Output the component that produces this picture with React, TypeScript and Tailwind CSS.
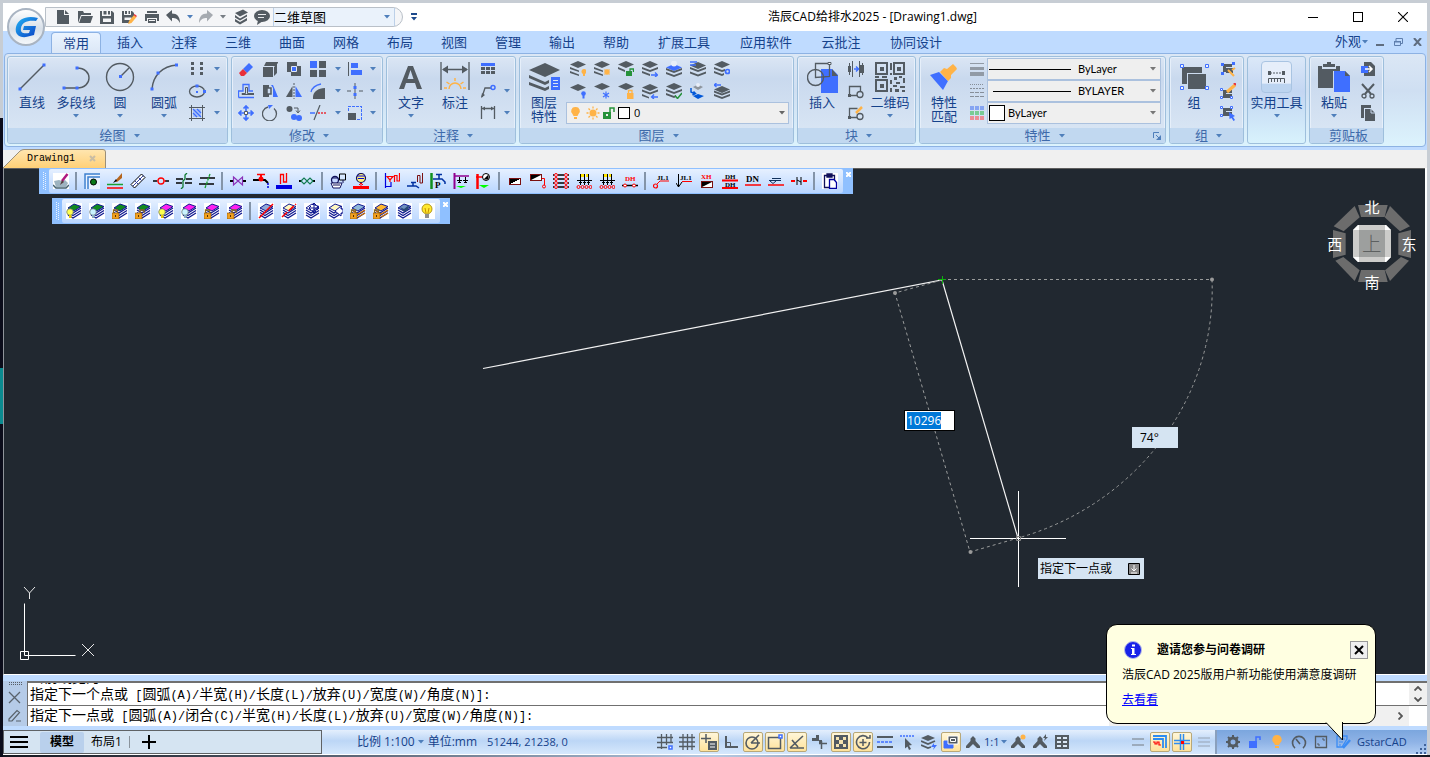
import { useEffect, useRef } from "react";
import type { ReactNode } from "react";

const K = "#535b62";
const B = "#3f6fff";
const O = "#ffb347";
const G = "#26923a";
const R = "#e8303a";
const N = "#101890";

type SvgProps = { w?: number; h?: number; vb?: string; crisp?: boolean; children: ReactNode };
function S({ w = 16, h = 16, vb, crisp, children }: SvgProps) {
  return (
    <svg
      width={w}
      height={h}
      viewBox={vb ?? `0 0 ${w} ${h}`}
      fill="none"
      className="block shrink-0"
      shapeRendering={crisp ? "crispEdges" : "auto"}
      aria-hidden="true"
    >
      {children}
    </svg>
  );
}

function Arrow({ color = "#4f7fbb" }: { color?: string }) {
  return (
    <S w={6} h={4}>
      <path d="M0 0h6L3 3.500z" fill={color} />
    </S>
  );
}

/* ---------- quick access icons ---------- */
const quickIcons: { name: string; icon: ReactNode; width: string }[] = [
  { name: "新建", width: "w-[22px]", icon: <S><path d="M2 1h7v5h5v9H2zM10 1l4 4h-4z" fill={K} /></S> },
  { name: "打开", width: "w-[22px]", icon: <S><path d="M1 14V2h5l1 2h7v2H4z" fill={K} /><path d="M4.500 7H16l-2.500 7H2z" fill={K} /></S> },
  { name: "保存", width: "w-[22px]", icon: <S><path d="M1 2h2v5h9V2h1l2 2v11H1z" fill={K} /><path d="M4.500 2h3v3.500h-3zM9 2h2v3.500H9z" fill={K} /><path d="M4 9.500h8V13H4z" fill="#f4f5f7" /></S> },
  { name: "另存为", width: "w-[22px]", icon: <S><path d="M1 2h2v4h7V2h1l2 2v4l-4 6H1z" fill={K} /><path d="M4 2h2v3H4zM7.500 2H9v3H7.500z" fill={K} /><path d="M3.500 8.500h7V11h-7z" fill="#f4f5f7" /><path d="M7 15l1-3 5-6 2.500 2-5 6z" fill={O} /><path d="M12.500 6l1-1 2.500 2-1 1z" fill={R} /></S> },
  { name: "打印", width: "w-[23px]", icon: <S><path d="M3 2h10v2H3zM1 5h14v7h-2V9H3v3H1z" fill={K} /><path d="M4 10h8v4H4z" fill={K} /><path d="M5 11h6v1H5z" fill="#f4f5f7" /></S> },
  { name: "放弃", width: "w-[20px]", icon: <S><path d="M1 6l6-5v3.500c5 0 8 3 8 9.500-2-4-4-5-8-5v3.500z" fill={K} /></S> },
  { name: "放弃列表", width: "w-[13px]", icon: <Arrow /> },
  { name: "重做", width: "w-[20px]", icon: <S><path d="M15 6L9 1v3.500c-5 0-8 3-8 9.500 2-4 4-5 8-5v3.500z" fill="#a5aab0" /></S> },
  { name: "重做列表", width: "w-[14px]", icon: <Arrow color="#777d84" /> },
  { name: "图层", width: "w-[21px]", icon: <S><path d="M2 4l8-3.500 5 3L7 7.500zM2 6l5 3.500 7-4v2l-7 4-5-3zM2 10l5 3 7-4v2.500L7 15.500l-5-3z" fill={K} /></S> },
  { name: "消息", width: "w-[22px]", icon: <S><ellipse cx="8" cy="7" rx="8" ry="6" fill={K} /><path d="M4 11l-1 5 6-4z" fill={K} /><path d="M4 5h8v1H4zM4 8h6v1H4z" fill="#e8eaec" /></S> },
];

/* ---------- ribbon primitives ---------- */
function Panel({ title, width, more = true, launcher, children }: { title: string; width: string; more?: boolean; launcher?: boolean; children: ReactNode }) {
  return (
    <section
      className={`${width} shrink-0 flex flex-col h-[88px] rounded-[3px] border border-[#9ebfdc] shadow-[inset_0_0_0_1px_#e6effa] overflow-hidden bg-linear-to-b from-[#dbe6f4] from-0% via-[#c9d9ee] via-25% to-[#dce8f5] to-100%`}
    >
      <div className="flex flex-1 px-[2px]">{children}</div>
      <h2 className="relative flex h-[15px] items-center justify-center gap-2 bg-[#c1d8f0] pl-1 text-[13px] leading-[15px] text-[#3e6aaa]">
        {title}
        {more && <Arrow />}
        {launcher && (
          <span className="absolute right-1 top-1">
            <S w={8} h={8}><path d="M.500 6V.500H6M3 3l3 3" stroke="#4f7fbb" /><path d="M8 3v5H3z" fill="#4f7fbb" /></S>
          </span>
        )}
      </h2>
    </section>
  );
}

function Big({ icon, label, second, arrow, width = "w-11" }: { icon: ReactNode; label: string; second?: string; arrow?: boolean; width?: string }) {
  return (
    <button className={`${width} shrink-0 flex flex-col items-center pt-1 text-[13px] text-[#15428b] whitespace-nowrap`}>
      <span className="flex h-8 items-center justify-center">{icon}</span>
      {second ? (
        <span className="flex flex-col pt-[2px] leading-[14px]"><span>{label}</span><span>{second}</span></span>
      ) : (
        <span className="leading-[18px]">{label}</span>
      )}
      {arrow && <span className="pt-[3px]"><Arrow /></span>}
    </button>
  );
}

function Cell({ name, children }: { name: string; children?: ReactNode }) {
  return (
    <button aria-label={name} className="flex items-center justify-center">
      {children}
    </button>
  );
}
const Drop = ({ name }: { name: string }) => <Cell name={name}><Arrow /></Cell>;

const Chev = ({ y, c = K }: { y: number; c?: string }) => (
  <path d={`M0 ${y}l8 3 8-3v2l-8 3-8-3z`} fill={c} />
);
const Dia = ({ y = 0, c = K }: { y?: number; c?: string }) => <path d={`M0 ${y + 3.5}l8-3.500 8 3.500-8 3.500z`} fill={c} />;

const layerIcons: { name: string; icon: ReactNode }[] = [
  { name: "关闭图层", icon: <S><Dia /><path d="M0 6l9 3.500V11L0 8zM0 10l9 3.500V15L0 12z" fill={K} /><circle cx="14" cy="10.500" r="2.500" fill={O} /><path d="M13 12h2v3h-2z" fill={O} /></S> },
  { name: "冻结图层", icon: <S><Dia /><path d="M0 6l9 3.500V11L0 8zM0 10l9 3.500V15L0 12z" fill={K} /><path d="M10 8h6v6h-6z" fill={O} opacity=".5" /><circle cx="13" cy="11" r="2.400" fill={O} /></S> },
  { name: "解锁图层", icon: <S><Dia /><path d="M0 6l7 3v2L0 8z" fill={K} /><path d="M8 10h6v5H8z" fill={G} /><path d="M12 10V8h3.500v3" stroke={G} strokeWidth="1.300" /></S> },
  { name: "图层匹配", icon: <S><Dia /><Chev y={6} /><path d="M0 10l8 3v2l-8-3z" fill={K} /><path d="M9 14h6M13 11.500l2.500 2.500L13 16" stroke={B} strokeWidth="1.300" /></S> },
  { name: "隔离图层", icon: <S><Dia y={3} c={B} /><circle cx="8" cy="2.500" r="3" fill="#e8eef8" /><Chev y={7} /><Chev y={11} /></S> },
  { name: "图层状态", icon: <S><Dia y={1} /><Chev y={6} /><Chev y={10.5} /><path d="M0 1h7M0 4h6" stroke={B} strokeWidth="1.500" /></S> },
  { name: "图层设置", icon: <S><Dia /><path d="M0 6l8 3 3-1v2l-3 1-8-3zM0 10l8 3 2-1v2l-2 1-8-3z" fill={K} /><circle cx="13.500" cy="10.500" r="2" stroke={B} strokeWidth="1.700" /></S> },
  { name: "打开图层", icon: <S><Dia y={1} /><circle cx="13.500" cy="10.500" r="2.300" fill={B} /><path d="M12.500 12h2v3.500h-2z" fill={B} /></S> },
  { name: "解冻图层", icon: <S><Dia /><path d="M12 8.500v7M9 10l6 4M15 10l-6 4" stroke={B} strokeWidth="1.200" /></S> },
  { name: "锁定图层", icon: <S><Dia /><path d="M9 10h6.500v6H9z" fill={O} /><path d="M10.500 10V7.500h3.500V10" stroke={O} strokeWidth="1.300" /></S> },
  { name: "上一图层", icon: <S><Dia y={1} /><Chev y={6.5} /><path d="M0 11l7 3v1.500L0 13z" fill={K} /><path d="M9.500 14H16M12 11.500L9.500 14l2.500 2" stroke={B} strokeWidth="1.300" /></S> },
  { name: "更改为当前", icon: <S><Dia /><Chev y={6} /><path d="M0 10l8 3 2-1v2l-2 1-8-3z" fill={K} /><path d="M9 12.500l2.500 3L16 10" stroke={G} strokeWidth="1.500" /></S> },
  { name: "复制到图层", icon: <S><path d="M3 4l5-2.500L13 4 8 7z" fill="#8e959d" /><circle cx="8" cy="2" r="2" fill="#e8eef8" /><path d="M3 13l5-2 6 2-6 3z" fill="#0057d8" /><path d="M1 5v4l4 2M2.500 12l3-1.500-2-2" stroke="#0057d8" strokeWidth="1.500" /></S> },
  { name: "漫游图层", icon: <S><Dia y={3} /><Chev y={7.5} /><Chev y={11} /><path d="M0 2h7M2.500 0L0 2l2.500 2" stroke={B} strokeWidth="1.300" /></S> },
];

function DrawPanel() {
  return (
    <Panel title="绘图" width="w-[221px]">
      <Big label="直线" icon={<S w={28} h={30}><path d="M2 27L26 3" stroke={K} strokeWidth="1.400" /><path d="M.500 25.500h3v3h-3zM24.500 1.500h3v3h-3z" fill={B} /></S>} />
      <Big label="多段线" arrow icon={<S w={28} h={30}><path d="M2 26h13c16 0 16-20 0-20" stroke={K} strokeWidth="1.400" /><path d="M.500 24.500h3v3h-3zM13.500 24.500h3v3h-3zM13.500 4.500h3v3h-3z" fill={B} /></S>} />
      <Big label="圆" arrow icon={<S w={30} h={30}><circle cx="15" cy="15" r="13.500" stroke={K} strokeWidth="1.400" /><path d="M15 15l9-9" stroke={K} strokeWidth="1.400" /><path d="M14 13h3v3h-3z" fill={B} /></S>} />
      <Big label="圆弧" arrow icon={<S w={28} h={30}><path d="M2 27C3 14 12 4 27 3" stroke={K} strokeWidth="1.400" /><path d="M.500 25.500h3v3h-3zM6.500 9.500h3v3h-3zM25 1.500h3v3h-3z" fill={B} /></S>} />
      <div className="grid grid-cols-[22px_18px] grid-rows-[22px_22px_22px] pt-px">
        <Cell name="多点"><S crisp><path d="M2 1h3v3H2zM11 1h3v3h-3zM2 6h3v3H2zM11 6h3v3h-3zM2 11h3v3H2zM11 11h3v3h-3z" fill={K} /></S></Cell>
        <Drop name="多点列表" />
        <Cell name="椭圆"><S w={18}><ellipse cx="9" cy="8.500" rx="7.500" ry="5.500" stroke={K} strokeWidth="1.300" /><path d="M7.500 1.500h3v3h-3zM15 7h3v3h-3zM8 8h2v2H8z" fill={B} /></S></Cell>
        <Drop name="椭圆列表" />
        <Cell name="填充"><S><path d="M0 2.500h16M0 13.500h16M2.500 0v16M13.500 0v16" stroke={K} /><path d="M4 4h8v8H4z" fill="#a9c1f5" /><path d="M4 8l4 4M4 4l8 8M8 4l4 4" stroke={B} strokeWidth="1.200" /></S></Cell>
        <Drop name="填充列表" />
      </div>
    </Panel>
  );
}

function ModifyPanel() {
  return (
    <Panel title="修改" width="w-[152px]">
      <div className="grid grid-cols-[24px_24px_24px_24px_15px_20px_15px] grid-rows-[22px_22px_22px] pt-px">
        <Cell name="删除"><S><path d="M5 8l6-6 4 4-6 6z" fill={B} /><path d="M5 8l4 4-3 3H3l-2-3z" fill={R} /></S></Cell>
        <Cell name="长方体"><S><path d="M1 6h10v10H1zM4 1h12v1l-3 3H2zM12 6l3-3v9l-3 3z" fill={K} /></S></Cell>
        <Cell name="复制"><S><path d="M1 1h10v4H5v6H1z" fill={K} /><path d="M5 5h10v10H5z" fill={K} /><path d="M5.500 5.500h5v5h-5z" fill={B} stroke="#dfe8f5" /></S></Cell>
        <Cell name="阵列"><S crisp><path d="M0 0h7v7H0z" fill={B} /><path d="M9 0h7v7H9zM0 9h7v7H0zM9 9h7v7H9z" fill={K} /></S></Cell>
        <Drop name="阵列列表" />
        <Cell name="对齐"><S crisp><path d="M1 1h1v14H1z" fill={K} /><path d="M4 2h7v5H4zM4 9h11v5H4z" fill={B} /></S></Cell>
        <Drop name="对齐列表" />
        <Cell name="偏移"><S><path d="M.500 14.500V8H5V1.500h6V8h4M.500 14.500H16" stroke={B} strokeWidth="1.300" /><path d="M16 11.500H4l0-1h3.500V4.500h2v6H16" stroke={K} /></S></Cell>
        <Cell name="拉伸"><S><path d="M1 2h6v3H5v6h2v3H1z" fill={K} /><path d="M5 5h4v6H5z" stroke={K} strokeWidth="1.500" /><path d="M9 2h2l5 12h-5V5z" fill={B} /></S></Cell>
        <Cell name="镜像"><S><path d="M6.500 3v11H0z" fill={K} /><path d="M9.500 3v11H16z" fill={B} /><path d="M8 0v16" stroke={K} strokeDasharray="2 1" /></S></Cell>
        <Cell name="圆角"><S><path d="M3 16v-2C3 9 8 5 15 5v11z" fill={K} /><path d="M1 9c1-4 5-7 10-8" stroke={B} strokeWidth="1.300" /></S></Cell>
        <Drop name="圆角列表" />
        <Cell name="打断"><S><path d="M8 0v16M0 8h4M12 8h4" stroke={K} /><path d="M6.500 3h3v3h-3zM6.500 10h3v3h-3z" fill={B} /></S></Cell>
        <Drop name="打断列表" />
        <Cell name="移动"><S><path d="M8 1v14M1 8h14M5.500 3.500L8 1l2.500 2.500M5.500 12.500L8 15l2.500-2.500M3.500 5.500L1 8l2.500 2.500M12.500 5.500L15 8l-2.500 2.500" stroke={B} strokeWidth="1.700" /><path d="M6.500 6.500h3v3h-3z" fill="#fff" stroke={K} /></S></Cell>
        <Cell name="旋转"><S><path d="M12 3.500A7 7 0 1 1 6 2" stroke={K} strokeWidth="1.300" /><path d="M6 0h5L7 4z" fill={B} /></S></Cell>
        <Cell name="复制对象"><S><circle cx="3.500" cy="4" r="3" fill={K} /><circle cx="8" cy="12" r="3" fill={B} /><circle cx="13" cy="13" r="3" fill={B} /><path d="M8 3h4v4M10 5.500L12 8l2-2.500" stroke={K} /></S></Cell>
        <Cell name="修剪"><S><path d="M4 15L10 0" stroke={K} strokeWidth="1.200" /><path d="M0 8h5" stroke={B} strokeWidth="1.300" /><path d="M8 8h8" stroke={R} strokeDasharray="2 1" strokeWidth="1.300" /></S></Cell>
        <Drop name="修剪列表" />
        <Cell name="缩放"><S crisp><path d="M1 8h8v7H1z" fill={K} /><path d="M1.500 6V1.500h13v13H10" stroke={B} strokeDasharray="3 1" /></S></Cell>
        <Drop name="缩放列表" />
      </div>
    </Panel>
  );
}

function AnnotatePanel() {
  return (
    <Panel title="注释" width="w-[130px]">
      <Big label="文字" arrow icon={<S w={24} h={26}><path d="M0 25L9 2h5l9 23h-5l-2-6H7l-2 6zM8.500 15h6L11.500 6z" fill={K} fillRule="evenodd" /></S>} />
      <Big label="标注" icon={<S w={30} h={30}><path d="M1 0v28M29 0v28M3 7.500h24" stroke={K} strokeWidth="1.300" /><path d="M2 7.500l6-4v8zM28 7.500l-6-4v8z" fill={K} /><path d="M9 27a6 6 0 0 1 12 0" stroke={O} strokeWidth="1.500" /><path d="M15 16v3M6.500 20l3 2M23.500 20l-3 2M4 26h3M26 26h-3" stroke={O} strokeWidth="1.500" /></S>} />
      <div className="grid grid-cols-[22px_16px] grid-rows-[22px_22px_22px] pt-px">
        <Cell name="表格"><S crisp><path d="M1 2h14v3H1z" fill={B} /><path d="M1 6h4v3H1zM6 6h4v3H6zM11 6h4v3h-4zM1 10h4v3H1zM6 10h4v3H6zM11 10h4v3h-4z" fill={K} /></S></Cell>
        <span />
        <Cell name="引线"><S><path d="M2 14l3-9h6" stroke={K} strokeWidth="1.300" /><path d="M1 15l1-5 3 2z" fill={K} /><circle cx="13" cy="4.500" r="2" stroke={B} strokeWidth="1.500" /></S></Cell>
        <Drop name="引线列表" />
        <Cell name="线性标注"><S><path d="M1.500 1v13M14.500 1v13M2 3.500h12" stroke={K} strokeWidth="1.300" /><path d="M2 3.500L5 1.500v4zM14 3.500l-3-2v4z" fill={K} /></S></Cell>
        <Drop name="标注列表" />
      </div>
    </Panel>
  );
}

function LayerPanel() {
  return (
    <Panel title="图层" width="w-[275px]">
      <Big label="图层" second="特性" icon={<S w={33} h={30}><path d="M1 8l16-7 15 7-15 7z" fill={K} /><path d="M1 13v3l16 7 4-2v-3l-4 2zM1 20v3l16 6 4-2v-3l-4 2z" fill={K} /><path d="M23 15h9v13h-9z" fill={B} /><path d="M25 18.500h5M25 21.500h5M25 24.500h5" stroke="#dbe6f4" /></S>} />
      <div className="flex flex-1 flex-col pt-px">
        <div className="grid grid-cols-[24px_24px_24px_24px_24px_24px_24px] grid-rows-[22px_22px]">
          {layerIcons.map((l) => <Cell key={l.name} name={l.name}>{l.icon}</Cell>)}
        </div>
        <label className="flex h-[22px] w-[223px] items-center gap-[2px] border border-[#abc1de] bg-[#efefef] px-[3px]">
          <S w={11}><path d="M5.500 2a4 4 0 0 1 3 7l-1 2h-4l-1-2a4 4 0 0 1 3-7zM4 12h3v2H4z" fill={O} /></S>
          <span className="pl-[3px]"><S w={14}><circle cx="7" cy="8" r="3.500" fill={O} /><path d="M7 1.500v2M7 12.500v2M.500 8h2M11.500 8h2M2.500 3.500l1.500 1.500M10 11l1.500 1.500M2.500 12.500L4 11M10 5l1.500-1.500" stroke={O} strokeWidth="1.300" /></S></span>
          <S w={14}><path d="M1 7h8v7H1z" fill={G} /><path d="M8 7V3h4v4" stroke={G} strokeWidth="1.500" /><path d="M4 9h2v2H4z" fill="#efefef" /></S>
          <span className="size-[12px] border border-black bg-white" />
          <select aria-label="当前图层" className="flex-1 appearance-none bg-transparent pl-[2px] text-[11px] leading-4 text-black">
            <option>0</option>
          </select>
          <Arrow color="#666" />
        </label>
      </div>
    </Panel>
  );
}

function BlockPanel() {
  return (
    <Panel title="块" width="w-[119px]">
      <Big label="插入" icon={<S w={31} h={31}><path d="M14 7h11l6 6v18H14z" fill={B} /><path d="M25 7l6 7h-6z" fill={K} /><circle cx="8.500" cy="15.500" r="8" stroke={K} strokeWidth="1.400" /><path d="M8.500 15.500v-14h14v13z" stroke={K} strokeWidth="1.300" /><path d="M21 .500h3v2h-3z" fill="#fff" stroke={K} /></S>} />
      <div className="grid w-6 grid-rows-[22px_22px_22px] pt-px">
        <Cell name="定义块"><S><path d="M1.500 2v12M14.500 2v12M4.500 0v16M11.500 0v16" stroke={K} /><path d="M0 5h3v6H0zM11 4h5v8h-5z" fill={K} /><path d="M6 8h4M8 5.500L10.500 8 8 10.500" stroke={B} strokeWidth="1.500" /></S></Cell>
        <Cell name="块属性"><S><path d="M1.500 13V3.500h11V8M1 12.500h8" stroke={K} strokeWidth="1.300" /><path d="M0 11h3v3H0z" fill={K} /><circle cx="12" cy="11.500" r="3" stroke={K} strokeWidth="1.300" /></S></Cell>
        <Cell name="编辑块"><S><path d="M1.500 13V3.500h8M1 12.500h8" stroke={K} strokeWidth="1.300" /><path d="M0 11h3v3H0z" fill={K} /><circle cx="12" cy="11.500" r="3" stroke={K} strokeWidth="1.300" /><path d="M8 8l6-6" stroke={O} strokeWidth="2.500" /></S></Cell>
      </div>
      <Big label="二维码" arrow icon={
        <S w={30} h={30} crisp>
          <path d="M1 1h11v11H1zM19 1h10v11H19zM1 18h11v11H1z" stroke={K} strokeWidth="2" />
          <path d="M5 5h4v4H5zM22 5h4v4h-4zM5 22h4v4H5zM15 1h2v7h-2zM15 11h2v2h-2zM0 14h4v2H0zM7 14h5v2H7zM19 15h3v3h-3zM24 14h3v2h-3zM28 16h2v5h-2zM15 18h2v4h-2zM21 20h4v2h-4zM18 23h4v2h-4zM25 24h5v2h-5zM15 26h2v4h-2zM20 27h4v3h-4zM27 28h3v2h-3z" fill={K} />
        </S>} />
    </Panel>
  );
}

function Combo({ label, value, children }: { label: string; value: string; children: ReactNode }) {
  return (
    <label className="flex h-[22px] items-center border border-[#abc1de] bg-[#efefef] pl-px pr-1">
      {children}
      <select aria-label={label} className="min-w-0 flex-1 appearance-none bg-transparent font-['Lato',sans-serif] text-[11px] leading-4 text-black">
        <option>{value}</option>
      </select>
      <Arrow color="#777" />
    </label>
  );
}

function PropertyPanel() {
  return (
    <Panel title="特性" width="w-[247px]" launcher>
      <Big label="特性" second="匹配" icon={<S w={30} h={28}><path d="M1 12l9-3 9 9-5 9z" fill={B} /><path d="M11 9l4-4 3 1 6-5 3 3 1 2-6 6v3l-3 3z" fill={O} /></S>} />
      <div className="grid w-[21px] grid-rows-[22px_22px_22px] pt-px">
        <Cell name="线宽"><S crisp><path d="M1 2h14v1H1zM1 6h14v3H1zM1 11h14v4H1z" fill="#919aa5" /></S></Cell>
        <Cell name="线型"><S crisp><path d="M1 1.500h14" stroke="#868e98" strokeDasharray="1 1" /><path d="M1 5.500h14" stroke="#868e98" strokeDasharray="2 1" /><path d="M1 9.500h14M1 13.500h14" stroke="#868e98" strokeDasharray="4 1" /></S></Cell>
        <Cell name="颜色"><S crisp><path d="M1 1h4v4H1zM6 1h4v4H6zM11 1h4v4h-4z" fill="#86a5f2" /><path d="M1 6h4v4H1zM6 6h4v4H6zM11 6h4v4h-4z" fill="#7acb94" /><path d="M1 11h4v4H1zM6 11h4v4H6zM11 11h4v4h-4z" fill="#ec8d96" /></S></Cell>
      </div>
      <div className="flex flex-1 flex-col pr-[2px] pt-px">
        <Combo label="线宽" value="ByLayer"><span className="mr-[7px] h-px w-[82px] bg-black" /></Combo>
        <Combo label="线型" value="BYLAYER"><span className="ml-1 mr-[7px] h-px w-[78px] bg-black" /></Combo>
        <Combo label="颜色" value="ByLayer"><span className="mr-[3px] size-4 border border-black bg-white" /></Combo>
      </div>
    </Panel>
  );
}

function GroupPanel() {
  return (
    <Panel title="组" width="w-[75px]">
      <Big label="组" icon={<S w={29} h={28}><path d="M2 4h20v6H7v11H2z" fill={K} /><path d="M8 11h18v15H8z" fill={K} /><path d="M.500 1.500h3v3h-3zM25.500 1.500h3v3h-3zM.500 23.500h3v3h-3zM25.500 23.500h3v3h-3z" fill="#eef4fc" stroke={B} /></S>} />
      <div className="grid w-6 grid-rows-[22px_22px_22px] pt-px">
        <Cell name="解除组"><S><path d="M3 3h9v3H6v5H3z" fill={K} /><path d="M6 7h7v5H6z" fill={K} /><path d="M1 2h3v3H1zM12 1h3v3h-3zM1 11h3v3H1z" fill={B} /><path d="M8 9l6 6M12 9l3-2" stroke={O} strokeWidth="2" /></S></Cell>
        <Cell name="编辑组"><S><path d="M3 7h9v3H6v5H3z" fill={K} /><path d="M6 11h6v4H6z" fill={K} /><path d="M.500 5.500h2v2h-2zM.500 13.500h2v2h-2zM10.500 13.500h2v2h-2z" fill="#fff" stroke={B} /><path d="M7 9l8-7" stroke={O} strokeWidth="3" /><path d="M14 0l2 2" stroke={R} strokeWidth="2" /></S></Cell>
        <Cell name="选择组"><S><path d="M3 3h9v3H6v5H3z" fill={K} /><path d="M6 7h6v4H6z" fill={K} /><path d="M.500 1.500h2v2h-2zM10.500 1.500h2v2h-2zM.500 9.500h2v2h-2z" fill="#fff" stroke={B} /><path d="M9 7l6 4-2 1 2 3-1.500 1-2-3-2 1z" fill={B} /></S></Cell>
      </div>
    </Panel>
  );
}

function ClipboardPanel() {
  return (
    <Panel title="剪贴板" width="w-[75px]" more={false}>
      <Big label="粘贴" arrow icon={<S w={32} h={31}><path d="M0 4h4v3h14V4h4v5h-7v17H0z" fill={K} /><path d="M5 2h4V0h4v2h4v3H5z" fill={K} /><path d="M16 9h11l5 5v16H16z" fill={B} /><path d="M27 9l5 5h-5z" fill={K} /></S>} />
      <div className="grid w-6 grid-rows-[22px_22px_22px] pt-px">
        <Cell name="选择性粘贴"><S><path d="M4 1h7l4 4v10H4z" fill={K} /><path d="M1 5h7v7H1z" fill={B} /><path d="M5 8h7M9 5l3 3-3 3" stroke="#fff" strokeWidth="1.500" /></S></Cell>
        <Cell name="剪切"><S><path d="M2 1l9 10M14 1L5 11" stroke={K} strokeWidth="2" /><circle cx="4" cy="13" r="2" stroke={K} strokeWidth="1.300" /><circle cx="12" cy="13" r="2" stroke={K} strokeWidth="1.300" /></S></Cell>
        <Cell name="复制"><S><path d="M1 0h10v3H4v10H1z" fill={K} /><path d="M5 4h6l4 4v8H5z" fill={K} /><path d="M11 4v4h4" stroke="#c9d9ee" /></S></Cell>
      </div>
    </Panel>
  );
}

function UtilityButton() {
  return (
    <button className="flex h-[88px] w-[59px] shrink-0 flex-col items-center rounded-[3px] border border-[#9ebfdc] bg-linear-to-b from-[#dbe8f8] via-[#c3d6f2] via-40% to-[#d8f2fc] pt-1 text-[13px] text-[#15428b]">
      <span className="flex h-8 w-[31px] items-center justify-center rounded-[4px] border border-[#a9c4e2] bg-linear-to-b from-[#e6eefa] from-70% to-[#bcd4f0] to-75%">
        <S w={17} h={13}><path d="M2 2h13" stroke={K} strokeDasharray="2 1" /><path d="M0 0h3v4H0zM14 0h3v4h-3z" fill={K} /><path d="M.500 12V7.500h16V12M3.500 8v3M6.500 8v3M9.500 8v3M12.500 8v3" stroke={K} /></S>
      </span>
      <span className="leading-[18px]">实用工具</span>
      <span className="pt-[3px]"><Arrow /></span>
    </button>
  );
}

/* ---------- floating toolbars ---------- */
const T = ({ x, y, s, c = "#000", children }: { x: number; y: number; s: number; c?: string; children: string }) => (
  <text x={x} y={y} fontSize={s} fill={c} fontFamily="Liberation Serif, serif" fontWeight="bold">{children}</text>
);
const Box = ({ x, y }: { x: number; y: number }) => (
  <><rect x={x + 0.5} y={y + 0.5} width="11" height="6" fill="#fff" stroke="#7a1010" /><path d={`M${x + 1} ${y + 6}V${y + 1}h10z`} fill="#000" /></>
);
const Head = ({ head }: { head: ReactNode }) => (
  <><path d="M1 7.500h15M4.500 1v11M8.500 1v11M12.500 1v11" stroke="#000" /><path d="M3 9.500h3M7 9.500h3M11 9.500h3" stroke="#000" /><path d="M5 1h3v3H5zM10 1h2v3h-2z" fill="#ffe600" />{head}</>
);
const redRow = (y: number) => (
  <><circle cx="2.500" cy={y} r="1.500" stroke="red" /><circle cx="6.500" cy={y} r="1.500" stroke="red" /><circle cx="10.500" cy={y} r="1.500" stroke="red" /><circle cx="14.500" cy={y} r="1.500" stroke="red" /></>
);
const redCol = (x: number) => (
  <><circle cx={x} cy="2" r="1.500" stroke="red" /><circle cx={x} cy="6" r="1.500" stroke="red" /><circle cx={x} cy="10" r="1.500" stroke="red" /><circle cx={x} cy="14" r="1.500" stroke="red" /></>
);

const pipeGroups: { name: string; icon: ReactNode }[][] = [
  [{ name: "设置", icon: <S><path d="M0 0h16v16H0z" fill="#fff" /><path d="M1 8l5-1 3 1 3-1 3 3-2 4H3z" fill="#9db3c0" /><path d="M0 12l3 3h10l3-3" stroke="#43606f" strokeWidth="1.500" /><path d="M14.500 1L9 8" stroke="#b01880" strokeWidth="2.500" /><path d="M9 7l-2 5 4-3z" fill="#5a4040" /></S> }],
  [
    { name: "管线系统", icon: <S><path d="M0 0h16v16H0z" fill="#eaf3ff" /><path d="M1 16V1h15M4 16V4h12" stroke="#3b7fd0" strokeWidth="1.500" /><circle cx="9.500" cy="9" r="3" fill="#0a7a1a" stroke="#000" /></S> },
    { name: "绘制管线", icon: <S><path d="M0 11.500h16" stroke="#1ca030" strokeWidth="1.500" /><path d="M0 15h16" stroke="red" strokeWidth="1.500" /><path d="M8 8l7-8v5L10 9z" fill="#b5651d" /><path d="M6 10l3-4 1 2z" fill="#000" /></S> },
    { name: "多管绘制", icon: <S><path d="M1 11.500L11.500 1l3.500 3.500L4.500 15z" fill="#fff" stroke="#000" /><path d="M3 13L13.500 2.500M5 8l3 3M8.500 4.500l3 3" stroke="#3040a0" /></S> },
    { name: "立管", icon: <S><path d="M0 8h4M12 8h4" stroke="#000" strokeWidth="1.500" /><path d="M4 8h1.500M11 8h2" stroke="red" /><circle cx="8" cy="8" r="3" stroke="red" strokeWidth="1.300" /></S> },
    { name: "上下扣弯", icon: <S><path d="M0 6h7M0 10h6M10 6h6M9 10h7" stroke="#000" strokeWidth="1.300" /><path d="M5 16l2-2V8l2-2V2l2-2" stroke="#107a30" strokeWidth="1.300" /></S> },
    { name: "管线打断", icon: <S><path d="M1 5h15M0 11h15" stroke="#000" strokeWidth="1.400" /><path d="M11 1L6 15" stroke="#1ca030" strokeWidth="1.300" strokeDasharray="3 1" /></S> },
  ],
  [
    { name: "阀门", icon: <S><path d="M0 8h3M13 8h3" stroke="#000" strokeWidth="2" /><path d="M3.500 4l9 8V4l-9 8z" stroke="#8a2fb8" strokeWidth="1.200" /></S> },
    { name: "给水附件", icon: <S><path d="M0 7h12l3 3" stroke="#000" strokeWidth="2" /><circle cx="8" cy="6" r="2.500" fill="red" /><path d="M8 1v5" stroke="red" strokeWidth="2" /><path d="M4 1.500h8" stroke="red" strokeWidth="1.500" /><path d="M15 10v6" stroke="#0000e0" strokeWidth="1.500" strokeDasharray="2 1" /></S> },
    { name: "排水附件", icon: <S><path d="M0 12h16v4H0z" fill="#0000e0" /><path d="M4.500 11V1.500H7.500V9h3V0" stroke="red" strokeWidth="1.300" /></S> },
    { name: "管道附件", icon: <S><path d="M0 8h2M14 8h2" stroke="#000" strokeWidth="2" /><path d="M2 8l3-3 3 3 3-3 3 3-3 3-3-3-3 3z" stroke="#107a50" strokeWidth="1.200" /></S> },
  ],
  [
    { name: "设备连管", icon: <S><path d="M9.500 1h6v6h-6z" stroke="#000" /><circle cx="5" cy="7" r="3.500" fill="#c5d6ff" stroke="#10105a" strokeWidth="1.300" /><path d="M1 10h11l-2 5H3z" fill="#fff" stroke="#10105a" /><path d="M2 5h6M3 12h7M13 7v3" stroke="#10105a" /></S> },
    { name: "洁具布置", icon: <S><circle cx="8" cy="5" r="4.500" fill="#fff37a" stroke="#10105a" strokeWidth="1.200" /><path d="M4 3h8M5 5.500h6" stroke="#0000e0" /><path d="M8 13V10M6 12l2-2 2 2" stroke="red" /><path d="M0 13h16v3H0z" fill="red" /></S> },
  ],
  [
    { name: "系统图", icon: <S><path d="M1.500 0v15M1 13.500h6V9" stroke="#0000e0" strokeWidth="1.200" /><path d="M3 3.500h6L6 7zM6 7v2M10.500 9V2.500H13V8h2.500V0" stroke="red" strokeWidth="1.200" /></S> },
    { name: "给水系统", icon: <S><path d="M10.500 9V2.500H13V10h2.500V0" stroke="#7a1010" /><path d="M0 13h9l3 2M6 9v4M4 9.500h5" stroke="#0030a0" strokeWidth="1.500" /></S> },
    { name: "排水系统", icon: <S><path d="M1.500 0v16" stroke="#109020" strokeWidth="2.500" /><path d="M3 6h9l3 3v2M9 1v5M6 1.500h6" stroke="#0030a0" strokeWidth="1.500" /><T x={5} y={15} s={9}>P</T></S> },
    { name: "喷淋系统", icon: <S><path d="M1.500 0v16" stroke="#900090" strokeWidth="2" /><path d="M2 3h14" stroke="#900090" strokeWidth="1.500" /><path d="M6.500 4v6M12.500 4v6M4 7.500h5M10 7.500h5M5 9.500h3M11 9.500h3" stroke="#000" /><path d="M3 13h10l-5 2z" fill="#0f0" /></S> },
    { name: "消防系统", icon: <S><path d="M1.500 1v15" stroke="red" strokeWidth="2.500" /><path d="M0 4h7" stroke="red" strokeWidth="1.500" /><circle cx="10" cy="4" r="3.500" fill="#fff" stroke="#000" /><path d="M7.500 6.500l5-5v5z" fill="#000" /><path d="M3 12h10l-5 3z" fill="#0f0" /></S> },
  ],
  [
    { name: "消火栓", icon: <S crisp><Box x={2} y={5} /></S> },
    { name: "栓连管", icon: <S><Box x={0} y={1} /><path d="M12 5.500h2.500V12" stroke="red" /><circle cx="14" cy="13.500" r="1.500" stroke="red" /></S> },
    { name: "喷头矩形", icon: <S>{redCol(3)}{redCol(13)}<path d="M0 2h1M5 2h6M15 2h1M0 6h1M5 6h6M15 6h1M0 10h1M5 10h6M15 10h1M0 14h1M5 14h6M15 14h1" stroke="#000" strokeWidth="1.500" /></S> },
    { name: "任意喷头", icon: <S><Head head={redRow(14)} /></S> },
    { name: "喷头定位", icon: <S><Head head={redRow(14)} /></S> },
    { name: "喷淋管径", icon: <S><T x={3} y={8} s={7} c="red">DH</T><path d="M0 12.500h16" stroke="#000" strokeWidth="1.500" /><circle cx="3" cy="12.500" r="1.500" fill="#fff" stroke="red" /><circle cx="12" cy="12.500" r="1.500" fill="#fff" stroke="red" /></S> },
  ],
  [
    { name: "立管标注", icon: <S><circle cx="2.500" cy="13" r="2" stroke="red" strokeWidth="1.200" /><path d="M4 11l3-3h9" stroke="red" /><T x={4} y={7} s={7}>JL1</T></S> },
    { name: "多管标注", icon: <S><path d="M2.500 1v13M0 10l2.500 4L6 9" stroke="#000" /><path d="M6 8.500h10" stroke="red" /><T x={4} y={7} s={7}>JL1</T></S> },
    { name: "消火栓标注", icon: <S><T x={2} y={6} s={7} c="red">XH</T><Box x={2} y={8} /></S> },
    { name: "管径标注", icon: <S><T x={3} y={6} s={7}>DH</T><path d="M0 7.500h16M0 15h16" stroke="red" strokeWidth="2" /><T x={3} y={14} s={7}>DH</T></S> },
    { name: "单管管径", icon: <S><T x={1} y={9} s={9}>DN</T><path d="M0 12h16" stroke="red" strokeWidth="1.500" /></S> },
    { name: "标高标注", icon: <S><path d="M4 5.500h9M1 7.500h12M2 8l3 2.500L8 8" stroke="#10305a" /><path d="M0 12h16" stroke="red" strokeWidth="1.500" /></S> },
    { name: "文字线型", icon: <S><path d="M0 8h4M12 8h4" stroke="red" strokeWidth="2" /><path d="M6 4v8M10 4v8M6 7l4 2" stroke="#000" /></S> },
  ],
  [{ name: "材料表", icon: <S><path d="M0 0h16v16H0z" fill="#fff" /><path d="M2.500 2.500h10v12h-10zM5 1h5v3H5z" stroke="#10105a" strokeWidth="1.300" fill="#fff" /><path d="M7.500 6.500H12l2.500 3v6h-7z" fill="#fff" stroke="#0000a0" strokeWidth="1.300" /></S> }],
];

const Stack = ({ top = "#fff" }: { top?: string }) => (
  <><path d="M0 0h16v16H0z" fill="#fff" /><path d="M2 9.500l5 3 8-5M2 7l5 3 8-5M2 12l5 3 8-5" stroke={N} strokeWidth="1.200" /><path d="M2 5l6-4 7 2.500L8 8z" fill={top} stroke={N} /></>
);
const Bulb = ({ on }: { on?: boolean }) => (
  <><circle cx="4" cy="9" r="3.300" fill={on ? "#ffff50" : "#c9f2ff"} stroke="#5a6a70" strokeWidth=".7" /><path d="M3 12h2.500v3H3z" fill={on ? "#e8c800" : "#8ab0c0"} /></>
);
const Lock = ({ open }: { open?: boolean }) => (
  <><path d="M0 10h7v6H0z" fill="#f0a020" stroke="#8a5000" strokeWidth=".6" /><path d={open ? "M5 10V7h4v3" : "M1.500 10V7h4v3"} stroke="#8a6a20" strokeWidth="1.300" /><path d="M3 12h1v2H3z" fill="#5a3000" /></>
);
const GR = "#108a20";
const MG = "#ff20f0";
const layerGroups: { name: string; icon: ReactNode }[][] = [
  [
    { name: "开选择层", icon: <S><Stack top={GR} /><Bulb on /></S> },
    { name: "关选择层", icon: <S><Stack top={GR} /><Bulb /></S> },
    { name: "锁选择层", icon: <S><Stack top={GR} /><Lock /></S> },
    { name: "解锁选择层", icon: <S><Stack top={GR} /><Lock open /></S> },
    { name: "开其他层", icon: <S><Stack top={MG} /><Bulb on /></S> },
    { name: "关其他层", icon: <S><Stack top={MG} /><Bulb /></S> },
    { name: "锁其他层", icon: <S><Stack top={MG} /><Lock /></S> },
    { name: "解锁其他层", icon: <S><Stack top={MG} /><Lock open /></S> },
  ],
  [
    { name: "删除层", icon: <S><Stack top="#90a8d8" /><path d="M1 15L15 1" stroke="red" strokeWidth="1.500" /></S> },
    { name: "删除选择层", icon: <S><Stack top="#fff8c0" /><path d="M1 14L15 1" stroke="red" strokeWidth="1.500" strokeDasharray="7 2" /></S> },
    { name: "移动层", icon: <S><Stack /><path d="M10 0v10M5 5h10M8 2l2-2 2 2M8 8l2 2 2-2M7 3L5 5l2 2M13 3l2 2-2 2" stroke={N} /></S> },
    { name: "改层", icon: <S><Stack top="#fff8c0" /><path d="M8 8l6-5v3h2v4h-2v3z" fill="#fff" stroke={N} /></S> },
    { name: "全部锁定", icon: <S><Stack top="#90b8d8" /><path d="M3 8l5 3 7-4M8 14l7-4" stroke="#d07000" strokeWidth="1.300" /><Lock /></S> },
    { name: "全部解锁", icon: <S><Stack top="#ffb830" /><path d="M3 8l5 3 7-4M8 14l7-4" stroke="#d07000" strokeWidth="1.300" /><Lock /></S> },
    { name: "图层恢复", icon: <S><Stack top="#6f90c0" /><path d="M4 4l4 2 5-4-1 5-4 2z" fill="#284878" /></S> },
    { name: "全开层", icon: <S><path d="M0 0h16v16H0z" fill="#fff" /><circle cx="8" cy="6" r="5" fill="#ffe830" stroke="#a08000" strokeWidth=".8" /><path d="M6 5l1 5M10 5l-1 5" stroke="#c89000" /><path d="M6 11h4v4H6z" fill="#909090" /></S> },
  ],
];

function FloatingBar({ place, label, groups }: { place: string; label: string; groups: { name: string; icon: ReactNode }[][] }) {
  return (
    <div role="toolbar" aria-label={label} className={`absolute ${place} flex h-[26px] bg-[#8fc0ff]`}>
      <div className="flex w-[10px] items-center justify-center">
        <S w={4} h={18} crisp><path d="M1 0v18M3 1v17" stroke="#eaf3ff" strokeDasharray="1 1" /></S>
      </div>
      <div className="my-px flex items-center rounded-[2px] bg-linear-to-b from-[#e6f0ff] to-[#b9d6ff] pr-[2px]">
        {groups.map((group, i) => (
          <div key={i} className="flex items-center">
            {i > 0 && <span className="mx-[3px] h-[18px] w-[2px] bg-[#8494a8]" />}
            {group.map((t) => (
              <button key={t.name} aria-label={t.name} className="flex h-6 w-[23px] items-center justify-center">{t.icon}</button>
            ))}
          </div>
        ))}
      </div>
      <button aria-label="关闭" className="w-[10px] pl-[3px] pt-1 self-start"><S w={5} h={5}><path d="M0 0l5 5M5 0L0 5" stroke="#fff" strokeWidth="2" /></S></button>
    </div>
  );
}

/* ---------- drawing area ---------- */
function ViewCube() {
  return (
    <div className="absolute right-[6px] top-[29px]">
      <S w={92} h={95} vb="81 21 276 285">
        <g fill="#6c6c6c">
          <path d="M174 45h89l-9 36h-71z" /><path d="M174 276h89l-9-36h-71z" />
          <path d="M99 120l38 10v64l-38 10z" /><path d="M333 120l-38 10v64l38 10z" />
          <path d="M164 48l15 34-48 42-30-15z" /><path d="M270 48l-16 34 46 42 30-15z" />
          <path d="M106 212l24-11 49 40-15 32z" /><path d="M327 212l-24-11-48 40 15 32z" />
        </g>
        <path d="M174 105h84l15 15v81l-15 15h-84l-15-15v-81z" fill="#ccccca" />
        <path d="M174 105l-15 15 18 0v-15zM258 105l15 15h-18v-15zM159 201l15 15h3v-15zM273 201l-15 15h-3v-15z" fill="#fff" />
        <path d="M177 120h78v81h-78z" fill="#9d9f9e" />
        <g fontFamily="Noto Sans CJK SC, sans-serif" fontSize="45" fill="#fff" textAnchor="middle">
          <text x="216" y="68">北</text>
          <text x="216" y="294">南</text>
          <text x="104" y="179">西</text>
          <text x="327" y="179">东</text>
        </g>
        <text x="215" y="183" fontFamily="Noto Sans CJK SC, sans-serif" fontWeight="300" fontSize="58" fill="#5d6060" textAnchor="middle">上</text>
      </S>
    </div>
  );
}

function Drawing() {
  const length = useRef<HTMLInputElement>(null);
  useEffect(() => {
    length.current?.focus();
    length.current?.select();
  }, []);
  return (
    <main className="relative min-h-[300px] flex-1 overflow-hidden border-l border-r-2 border-b border-l-[#8f949a] border-r-white border-b-white bg-[#212830]">
      <svg className="absolute inset-0 size-full" fill="none" aria-hidden="true">
        <path d="M0 .500h2000" stroke="#5e5e5e" />
        <g transform="translate(-4 -168)">
          <path d="M483 368.500L942 280L1018 538" stroke="#f2f2f2" strokeWidth="1.200" />
          <path d="M942 279.500h270A270 259 0 0 1 1018 538L970 552L895 293L942 280" stroke="#999b9b" strokeDasharray="3 3" />
          <g fill="#9a9a9a">
            <circle cx="1212" cy="279.500" r="2" /><circle cx="895" cy="293" r="2" /><circle cx="970.500" cy="552" r="2" />
          </g>
          <path d="M970 538.500h96M1018.500 491v96" stroke="#fff" />
          <path d="M938 279.500h8M942.500 276v8" stroke="#10b010" />
          <path d="M1016.500 536.500h4v4h-4z" stroke="#888" />
        </g>
      </svg>
      <div className="absolute bottom-[10px] left-4">
        <S w={76} h={78}>
          <path d="M4.500 17.500v52M4.500 69.500h51" stroke="#fff" />
          <path d="M.500 65.500h8v8h-8z" stroke="#fff" />
          <path d="M4 1l5.500 6L15 1M9.500 7v6M62 58l12 12M74 58L62 70" stroke="#e8e8e8" />
        </S>
      </div>
      <FloatingBar place="left-[35px] top-0" label="给排水" groups={pipeGroups} />
      <FloatingBar place="left-12 top-[30px]" label="图层工具" groups={layerGroups} />
      <ViewCube />
      <input
        ref={length}
        aria-label="长度"
        defaultValue="10296"
        className="absolute left-[900px] top-[242px] h-[21px] w-[51px] border border-black bg-white pl-[2px] text-[12px] leading-[17px] text-black outline-none selection:bg-[#0078d7] selection:text-white"
      />
      <div className="absolute left-[1128px] top-[259px] h-[21px] w-[46px] bg-[#d5e4f2] pl-2 text-[12px] leading-[21px] text-black">74°</div>
      <div className="absolute left-[1034px] top-[390px] flex h-[21px] items-center justify-between gap-4 bg-[#d5e4f2] px-[2px] pr-1 text-[12px] text-black">
        指定下一点或
        <S w={12} h={12}><path d="M.500.500h11v11H.500z" fill="#8b8b8b" stroke="#000" /><path d="M6 2v6M3.500 5.500L6 8l2.500-2.500M3 10h6" stroke="#fff" /></S>
      </div>
    </main>
  );
}

/* ---------- command window ---------- */
const Lat = ({ children }: { children: string }) => <span className="font-['Liberation_Mono',monospace] text-[12px]">{children}</span>;
function Prompt({ head, options }: { head: string; options: [string, string][] }) {
  return (
    <p className="whitespace-pre pl-[2px] text-[14px] leading-[18px] text-black">
      {head}<Lat>{" ["}</Lat>
      {options.map(([name, key], i) => (
        <span key={key}>{i > 0 && <Lat>/</Lat>}{name}<Lat>{`(${key})`}</Lat></span>
      ))}
      <Lat>]:</Lat>
    </p>
  );
}

function CommandWindow() {
  return (
    <section aria-label="命令行" className="flex bg-[#bfdbff] pb-1 pt-[6px]">
      <div className="flex w-6 flex-col items-center justify-between bg-[#b5cbe8] pb-1">
        <S w={14} h={5} crisp><path d="M1 1.500h13M1 3.500h13" stroke="#555e68" strokeDasharray="1 1" /></S>
        <S w={14} h={13}><path d="M1 1l11 11M12 1L1 12" stroke="#59626c" strokeWidth="1.300" /></S>
        <S w={14} h={13}><path d="M1 10L9 1.500l2.500 2L4 12H1zM8 12h5" stroke="#59626c" strokeWidth="1.200" /></S>
      </div>
      <div className="flex-1 border-l border-t-2 border-[#707070] bg-white">
        <div className="flex border-b border-[#707070]">
          <div className="h-[22px] flex-1 overflow-hidden">
            <p className="-mt-[15px] pl-[2px] text-[14px] leading-[17px] text-black">当前线宽为</p>
            <Prompt head="指定下一个点或" options={[["圆弧", "A"], ["半宽", "H"], ["长度", "L"], ["放弃", "U"], ["宽度", "W"], ["角度", "N"]]} />
          </div>
          <div className="flex w-[18px] flex-col items-center justify-around bg-[#f0f0f0]">
            <S w={8} h={5}><path d="M.500 4.500L4 1l3.500 3.500" stroke="#555" strokeWidth="1.800" /></S>
            <S w={8} h={5}><path d="M.500.500L4 4 7.500.500" stroke="#555" strokeWidth="1.800" /></S>
          </div>
        </div>
        <div className="flex">
          <div className="h-5 flex-1">
            <Prompt head="指定下一点或" options={[["圆弧", "A"], ["闭合", "C"], ["半宽", "H"], ["长度", "L"], ["放弃", "U"], ["宽度", "W"], ["角度", "N"]]} />
          </div>
          <div className="mr-[18px] flex w-[300px] items-center justify-end bg-[#f0f0f0] pr-[6px]">
            <S w={5} h={8}><path d="M.500.500L4 4 .500 7.500" stroke="#555" strokeWidth="1.800" /></S>
          </div>
        </div>
      </div>
    </section>
  );
}

/* ---------- status bar ---------- */
const person = <path d="M8 2l2.500 2.500V7l4.500 5v2h-3l-4-4-4 4H1v-2l4.500-5V4.500z" fill={K} />;
const modes: { name: string; on?: boolean; icon: ReactNode }[] = [
  { name: "捕捉", icon: <S><path d="M4.500 0v15M9.500 0v11M14 0v9M0 3.500h16M0 8.500h16M0 13.500h10" stroke={K} strokeWidth="1.300" /><path d="M12 12h3v3h-3z" fill="#fff" stroke={B} strokeWidth="1.500" /></S> },
  { name: "栅格", icon: <S><path d="M4 0v16M8.500 0v16M13 0v16M0 3.500h16M0 8h16M0 12.500h16" stroke={K} strokeWidth="1.300" /></S> },
  { name: "动态输入", on: true, icon: <S><path d="M5 0v9M0 4.500h10" stroke={K} strokeWidth="1.500" /><path d="M7 7h9v9H7z" fill={K} /><path d="M9 10h5M9 13h5" stroke="#fff" /></S> },
  { name: "正交", icon: <S><path d="M3 2v11h12" stroke={K} strokeWidth="2" /><path d="M3 8.500h4.500V13" stroke={K} /></S> },
  { name: "极轴追踪", on: true, icon: <S><circle cx="7" cy="9" r="6" stroke={K} strokeWidth="1.600" /><path d="M6 9h9M6 9L14 1" stroke={K} strokeWidth="1.600" /></S> },
  { name: "对象捕捉", on: true, icon: <S><path d="M1.500 3.500h12v11h-12z" stroke={K} strokeWidth="1.500" /><path d="M12 1h3v3h-3z" fill="#fff" stroke={B} strokeWidth="1.500" /></S> },
  { name: "对象追踪", on: true, icon: <S><path d="M1 14h14M1 14L14 2M3 6l6 7" stroke={K} strokeWidth="1.600" /></S> },
  { name: "动态坐标", icon: <S><path d="M5 1h3v5h3v3H8V7H1V4h4z" fill={K} /><path d="M10.500 7v8M8 9.500h8" stroke={K} strokeWidth="1.500" /></S> },
  { name: "透明", on: true, icon: <S crisp><path d="M1 1h14v14H1z" fill={K} /><path d="M3 3h3v3H3zM10 3h3v3h-3zM6 6h4v4H6zM3 10h3v3H3zM10 10h3v3h-3z" fill="#f5e3b0" /></S> },
  { name: "循环选择", on: true, icon: <S><path d="M13 4a6.500 6.500 0 1 0 1.500 4" stroke={K} strokeWidth="1.600" /><path d="M8 5v7M4.500 8.500h7M11 4h4V1" stroke={K} strokeWidth="1.500" /></S> },
  { name: "线宽", icon: <S><path d="M0 3h16M0 13h16" stroke={K} strokeWidth="1.800" /><path d="M0 8h16" stroke={B} strokeWidth="1.500" strokeDasharray="3 1" /></S> },
  { name: "选择过滤", icon: <S><path d="M1 2h15" stroke={B} strokeWidth="1.500" strokeDasharray="2 1" /><path d="M6 4l7 7-3 .500 2 3.500-2 1-1.500-3.500-2.500 2z" fill={K} /></S> },
  { name: "图层过滤", icon: <S><path d="M0 4l7-3 7 3-7 3z" fill={K} /><path d="M0 7l7 3 7-3M0 11l7 3 3-1" stroke={K} strokeWidth="1.800" /><path d="M13 9l-3 4h3l-1 3 4-5h-3z" fill={B} /></S> },
  { name: "快捷特性", on: true, icon: <S><path d="M1 7h9v7H1z" fill={B} stroke={B} /><path d="M5 2h10v8H5z" fill={K} stroke="#fff" /><path d="M7.500 4.500h5v3h-5z" stroke="#fff" /></S> },
  { name: "注释比例", icon: <S>{person}</S> },
];

function Mode({ name, on, icon }: { name: string; on?: boolean; icon: ReactNode }) {
  return (
    <button
      aria-label={name}
      aria-pressed={!!on}
      className={`mx-px flex size-5 items-center justify-center rounded-[2px] border ${on ? "border-[#b8a878] bg-linear-to-b from-[#fff6d8] to-[#ffe29a]" : "border-transparent"}`}
    >
      {icon}
    </button>
  );
}

function StatusBar() {
  return (
    <footer className="flex h-[25px] border-b border-white text-[12px] text-[#15428b]">
      <nav className="flex w-[319px] shrink-0 items-center border border-[#5f6265] bg-[#d5e4f2] text-black">
        <button aria-label="菜单" className="px-[6px]"><S w={18} h={12} crisp><path d="M0 1h18M0 6h18M0 11h18" stroke="#000" strokeWidth="2" /></S></button>
        <button className="ml-[6px] h-[21px] w-11 rounded-[2px] bg-[#b9d0ec] font-bold leading-5">模型</button>
        <button className="px-[7px] leading-5">布局1</button>
        <span className="h-3 w-px bg-[#8a939c]" />
        <button aria-label="新建布局" className="pl-3"><S w={14} h={14} crisp><path d="M7 0v14M0 7h14" stroke="#000" strokeWidth="2" /></S></button>
      </nav>
      <div className="flex flex-1 items-center bg-linear-to-b from-[#e4effd] via-[#bcd6f6] via-45% to-[#d6e8fc]">
        <button className="flex items-center gap-[3px] pl-[35px]">比例 1:100 <Arrow /></button>
        <span className="pl-1">单位:mm</span>
        <span className="pl-[10px] text-[11px]">51244, 21238, 0</span>
        <div className="ml-auto flex items-center">
          {modes.map((m) => <Mode key={m.name} {...m} />)}
          <button className="flex w-[23px] items-center justify-between text-[11px]">1:1 <Arrow /></button>
          <Mode name="注释可见" icon={<S>{person}<circle cx="13" cy="3" r="2.500" fill={O} /></S>} />
          <Mode name="自动缩放" icon={<S>{person}<path d="M14 0l-3 4h2l-1 3 4-4h-2z" fill={K} /></S>} />
          <Mode name="表格" icon={<S crisp><path d="M1 1h14v14H1z" fill={K} /><path d="M3 3h4v2H3zM9 3h4v2H9zM3 7h4v2H3zM9 7h4v2H9zM3 11h4v2H3zM9 11h4v2H9z" fill="#dbe8f6" /></S>} />
        </div>
        <div className="flex items-center pl-[54px]">
          <Mode name="分隔" icon={<S w={12}><path d="M0 5h12M0 11h12" stroke="#8f9aa8" strokeWidth="1.500" /></S>} />
          <Mode name="管线显示" on icon={<S><path d="M1 2h13v12M1 5h10v9" stroke="#2d8cf0" strokeWidth="1.800" /><path d="M1 8h2v2h2V8h2v3h2" stroke="red" strokeWidth="1.200" /></S>} />
          <Mode name="交叉显示" on icon={<S><path d="M6.500 0v16M9.500 0v16M0 6.500h16M0 9.500h16" stroke="#2d8cf0" strokeWidth="1.500" /><path d="M7 7h3v3H7z" fill="red" /></S>} />
          <Mode name="分隔线" icon={<S w={12}><path d="M0 4h12M0 8h12M0 12h12" stroke="#98a4b4" strokeWidth="1.200" /></S>} />
        </div>
      </div>
      <div className="flex w-[212px] shrink-0 items-center border-l-2 border-[#8aa0bd] bg-linear-to-b from-[#7ba6de] via-[#8fb3e6] to-[#b0cdf3] pl-[5px]">
        <Mode name="设置" icon={<S><circle cx="8" cy="8" r="4" stroke={K} strokeWidth="3" /><path d="M8 1v3M8 12v3M1 8h3M12 8h3M3 3l2 2M11 11l2 2M3 13l2-2M11 5l2-2" stroke={K} strokeWidth="2" /></S>} />
        <Mode name="锁定" icon={<S><path d="M2 7h8v7H2z" fill={B} /><path d="M9 7V3h4v3" stroke={B} strokeWidth="1.500" /></S>} />
        <Mode name="提示" icon={<S><path d="M8 1a4.500 4.500 0 0 1 3 8l-1 2H6L5 9a4.500 4.500 0 0 1 3-8zM6 12h4v2H6z" fill={O} /></S>} />
        <Mode name="性能" icon={<S><path d="M4 14a6.500 6.500 0 1 1 8 0M5 5l4 5" stroke={K} strokeWidth="1.600" /></S>} />
        <Mode name="全屏" icon={<S><path d="M2.500 2.500h11v11h-11z" stroke={K} strokeWidth="1.300" /><path d="M9 5h2v2M5 9v2h2" stroke={K} /></S>} />
        <Mode name="问卷" icon={<S><path d="M2 2h10v3L7 13H2z" stroke="#3a8cf5" strokeWidth="1.300" /><path d="M4 5h6M4 8h4M4 11h2" stroke="#3a8cf5" /><path d="M8 14l7-8" stroke="#3a8cf5" strokeWidth="2.500" /></S>} />
        <span className="pl-[3px] text-[11px]">GstarCAD</span>
        <span className="ml-auto self-end"><S w={11} h={11} crisp><path d="M8 1h2v2H8zM8 5h2v2H8zM8 9h2v2H8zM4 5h2v2H4zM4 9h2v2H4zM0 9h2v2H0z" fill="#3f6299" /></S></span>
      </div>
    </footer>
  );
}

function Balloon() {
  return (
    <aside className="absolute bottom-[33px] right-[54px] w-[270px] rounded-[11px] border border-black bg-[#ffffe1] px-[15px] pb-[14px] pt-4 text-[12px] text-black">
      <div className="flex h-[18px] items-center">
        <S w={22} h={18}><circle cx="11" cy="9" r="8.500" fill="#1822e8" stroke="#b8bce8" /><path d="M10 3.500h3v2h-3zM9 7h3.500v6H14v1H9v-1h1V8H9z" fill="#fff" /></S>
        <strong className="flex-1 pl-[13px] leading-[18px]">邀请您参与问卷调研</strong>
        <button aria-label="关闭" className="-mr-2 flex size-[18px] items-center justify-center border border-[#999] bg-[#efefef]">
          <S w={10} h={10}><path d="M1 1l8 8M9 1L1 9" stroke="#000" strokeWidth="2" /></S>
        </button>
      </div>
      <p className="whitespace-nowrap pt-[6px] leading-5">浩辰CAD 2025版用户新功能使用满意度调研</p>
      <a href="#survey" className="mt-[6px] inline-block leading-[18px] text-[#0000ff] underline">去看看</a>
      <span className="absolute -bottom-[19px] right-[31px]">
        <S w={19} h={20}><path d="M1 .500L17.500 18V0" fill="#ffffe1" stroke="#000" /><path d="M2 0h15v1H2z" fill="#ffffe1" /></S>
      </span>
    </aside>
  );
}

/* ---------- application frame ---------- */
const tabs = ["常用", "插入", "注释", "三维", "曲面", "网格", "布局", "视图", "管理", "输出", "帮助", "扩展工具", "应用软件", "云批注", "协同设计"];
const tabWidth: Record<number, string> = { 2: "w-[50px]", 3: "w-16", 4: "w-[78px]" };

function TopBar() {
  return (
    <header className="relative">
      <button aria-label="应用菜单" className="absolute left-1 top-[5px] z-10 size-[38px] rounded-full border-2 border-[#a9b4c2] bg-linear-to-b from-white via-[#d7dfe8] via-55% to-[#f4f7fa]">
        <S w={34} h={34}>
          <defs><linearGradient id="logo" x1="0" y1="0" x2="1" y2="1"><stop offset="0" stopColor="#22b4f4" /><stop offset="1" stopColor="#0a3fc4" /></linearGradient></defs>
          <path d="M29 8C19 5 9 8 7 17c-2 9 6 12 14 9l4-1 2-9H15l-1 4h7l-1 3c-5 1-9 0-8-5 1-6 7-8 15-7z" fill="url(#logo)" />
        </S>
      </button>
      <div className="flex h-7 items-center bg-white">
        <div className="ml-[42px] flex h-5 items-center rounded-r-full border border-[#b9c0c8] bg-[#f4f5f7] pl-[6px]">
          {quickIcons.map((q) => (
            <button key={q.name} aria-label={q.name} className={`${q.width} flex items-center justify-center`}>{q.icon}</button>
          ))}
          <label className="flex h-[18px] w-[122px] items-center border-x border-[#bcd0e8] bg-[#eaf2fb] pr-1">
            <select aria-label="工作空间" className="flex-1 appearance-none bg-transparent text-[13px] leading-[18px] text-black"><option>二维草图</option></select>
            <Arrow />
          </label>
          <span className="w-[7px]" />
        </div>
        <button aria-label="自定义" className="ml-2"><S w={6} h={8}><path d="M0 0h6v2H0zM0 4h6L3 7.500z" fill="#1d4a8c" /></S></button>
        <h1 className="flex-1 pl-5 text-center text-[12px] text-black">浩辰CAD给排水2025 - [Drawing1.dwg]</h1>
        <div className="flex items-center justify-end gap-[35px] pr-[19px]">
          <button aria-label="最小化"><S w={10} h={10} crisp><path d="M0 5.500h10" stroke="#000" /></S></button>
          <button aria-label="最大化"><S w={10} h={10} crisp><path d="M.500.500h9v9h-9z" stroke="#000" /></S></button>
          <button aria-label="关闭"><S w={10} h={10}><path d="M0 0l10 10M10 0L0 10" stroke="#000" strokeWidth="1.100" /></S></button>
        </div>
      </div>
      <nav className="flex h-[22px] items-end bg-[#bfdbff] pl-[46px] pr-[5px] text-[13px] text-[#15428b]">
        {tabs.map((t, i) => (
          <button
            key={t}
            className={`mx-[2px] h-[21px] ${tabWidth[t.length]} whitespace-nowrap leading-[19px] ${i === 0 ? "rounded-t-[4px] border border-b-0 border-[#8db2e3] bg-linear-to-b from-[#ebf4ff] to-[#dbe7f6]" : ""}`}
          >
            {t}
          </button>
        ))}
        <div className="ml-auto flex h-[22px] items-center">
          <button className="flex items-center gap-px">外观 <Arrow /></button>
          <div className="flex items-center gap-[10px] pl-2">
            <button aria-label="最小化文档"><S w={8} h={8}><path d="M0 7h8" stroke="#5f6d80" strokeWidth="2" /></S></button>
            <button aria-label="还原文档"><S w={9} h={8}><path d="M.500 3.500h6v4h-6zM2 3V.500h6.500v5H7" stroke="#5f7fae" /><path d="M0 3h7v1.500H0z" fill="#5f7fae" /></S></button>
            <button aria-label="关闭文档"><S w={9} h={8}><path d="M1 0l7 8M8 0L1 8" stroke="#5f6d80" strokeWidth="2" /></S></button>
          </div>
        </div>
      </nav>
    </header>
  );
}

export default function App() {
  return (
    <div className="relative flex min-h-screen flex-col overflow-hidden bg-[#c7cdd4] font-['Open_Sans','Noto_Sans_CJK_SC',sans-serif] text-[12px]">
      <div className="absolute left-0 top-[118px] bottom-0 w-[3px] bg-[#0b0c1a]" />
      <div className="absolute left-0 top-[368px] h-14 w-[3px] bg-[#0b8a8f]" />
      <div className="relative mx-[3px] mt-[3px] flex flex-1 flex-col bg-[#f0f0f0]">
        <TopBar />
        <div className="bg-[#bfdbff] px-px pb-[3px]">
          <div className="flex gap-[3px] overflow-hidden rounded-[4px] border border-[#8db2e3] bg-linear-to-b from-[#dbe7f5] via-[#cfdff2] via-40% to-[#dcf3fd] p-[2px]">
            <DrawPanel />
            <ModifyPanel />
            <AnnotatePanel />
            <LayerPanel />
            <BlockPanel />
            <PropertyPanel />
            <GroupPanel />
            <UtilityButton />
            <ClipboardPanel />
          </div>
        </div>
        <div className="flex h-[18px] items-end">
          <button className="relative flex h-[19px] w-[103px] items-center pl-6 font-['Liberation_Mono',monospace] text-[10px] text-black">
            <svg className="absolute inset-0" width="103" height="19" fill="none" aria-hidden="true">
              <defs><linearGradient id="tab" x1="0" y1="0" x2="0" y2="1"><stop offset="0" stopColor="#ffe6b0" /><stop offset="1" stopColor="#ffd077" /></linearGradient></defs>
              <path d="M0 19L17 2q2-1.500 4-1.500h79q2.500 0 2.500 2.500V19" fill="url(#tab)" stroke="#9b8f78" />
            </svg>
            <span className="relative">Drawing1</span>
            <span className="relative pl-[14px]"><S w={7} h={7}><path d="M1 1l5 5M6 1L1 6" stroke="#c9bda4" strokeWidth="2" /></S></span>
          </button>
        </div>
        <Drawing />
        <CommandWindow />
        <StatusBar />
      </div>
      <div className="h-[2px] bg-linear-to-r from-[#14161f] via-[#b5c9e2] via-50% to-[#14161f]" />
      <Balloon />
    </div>
  );
}
